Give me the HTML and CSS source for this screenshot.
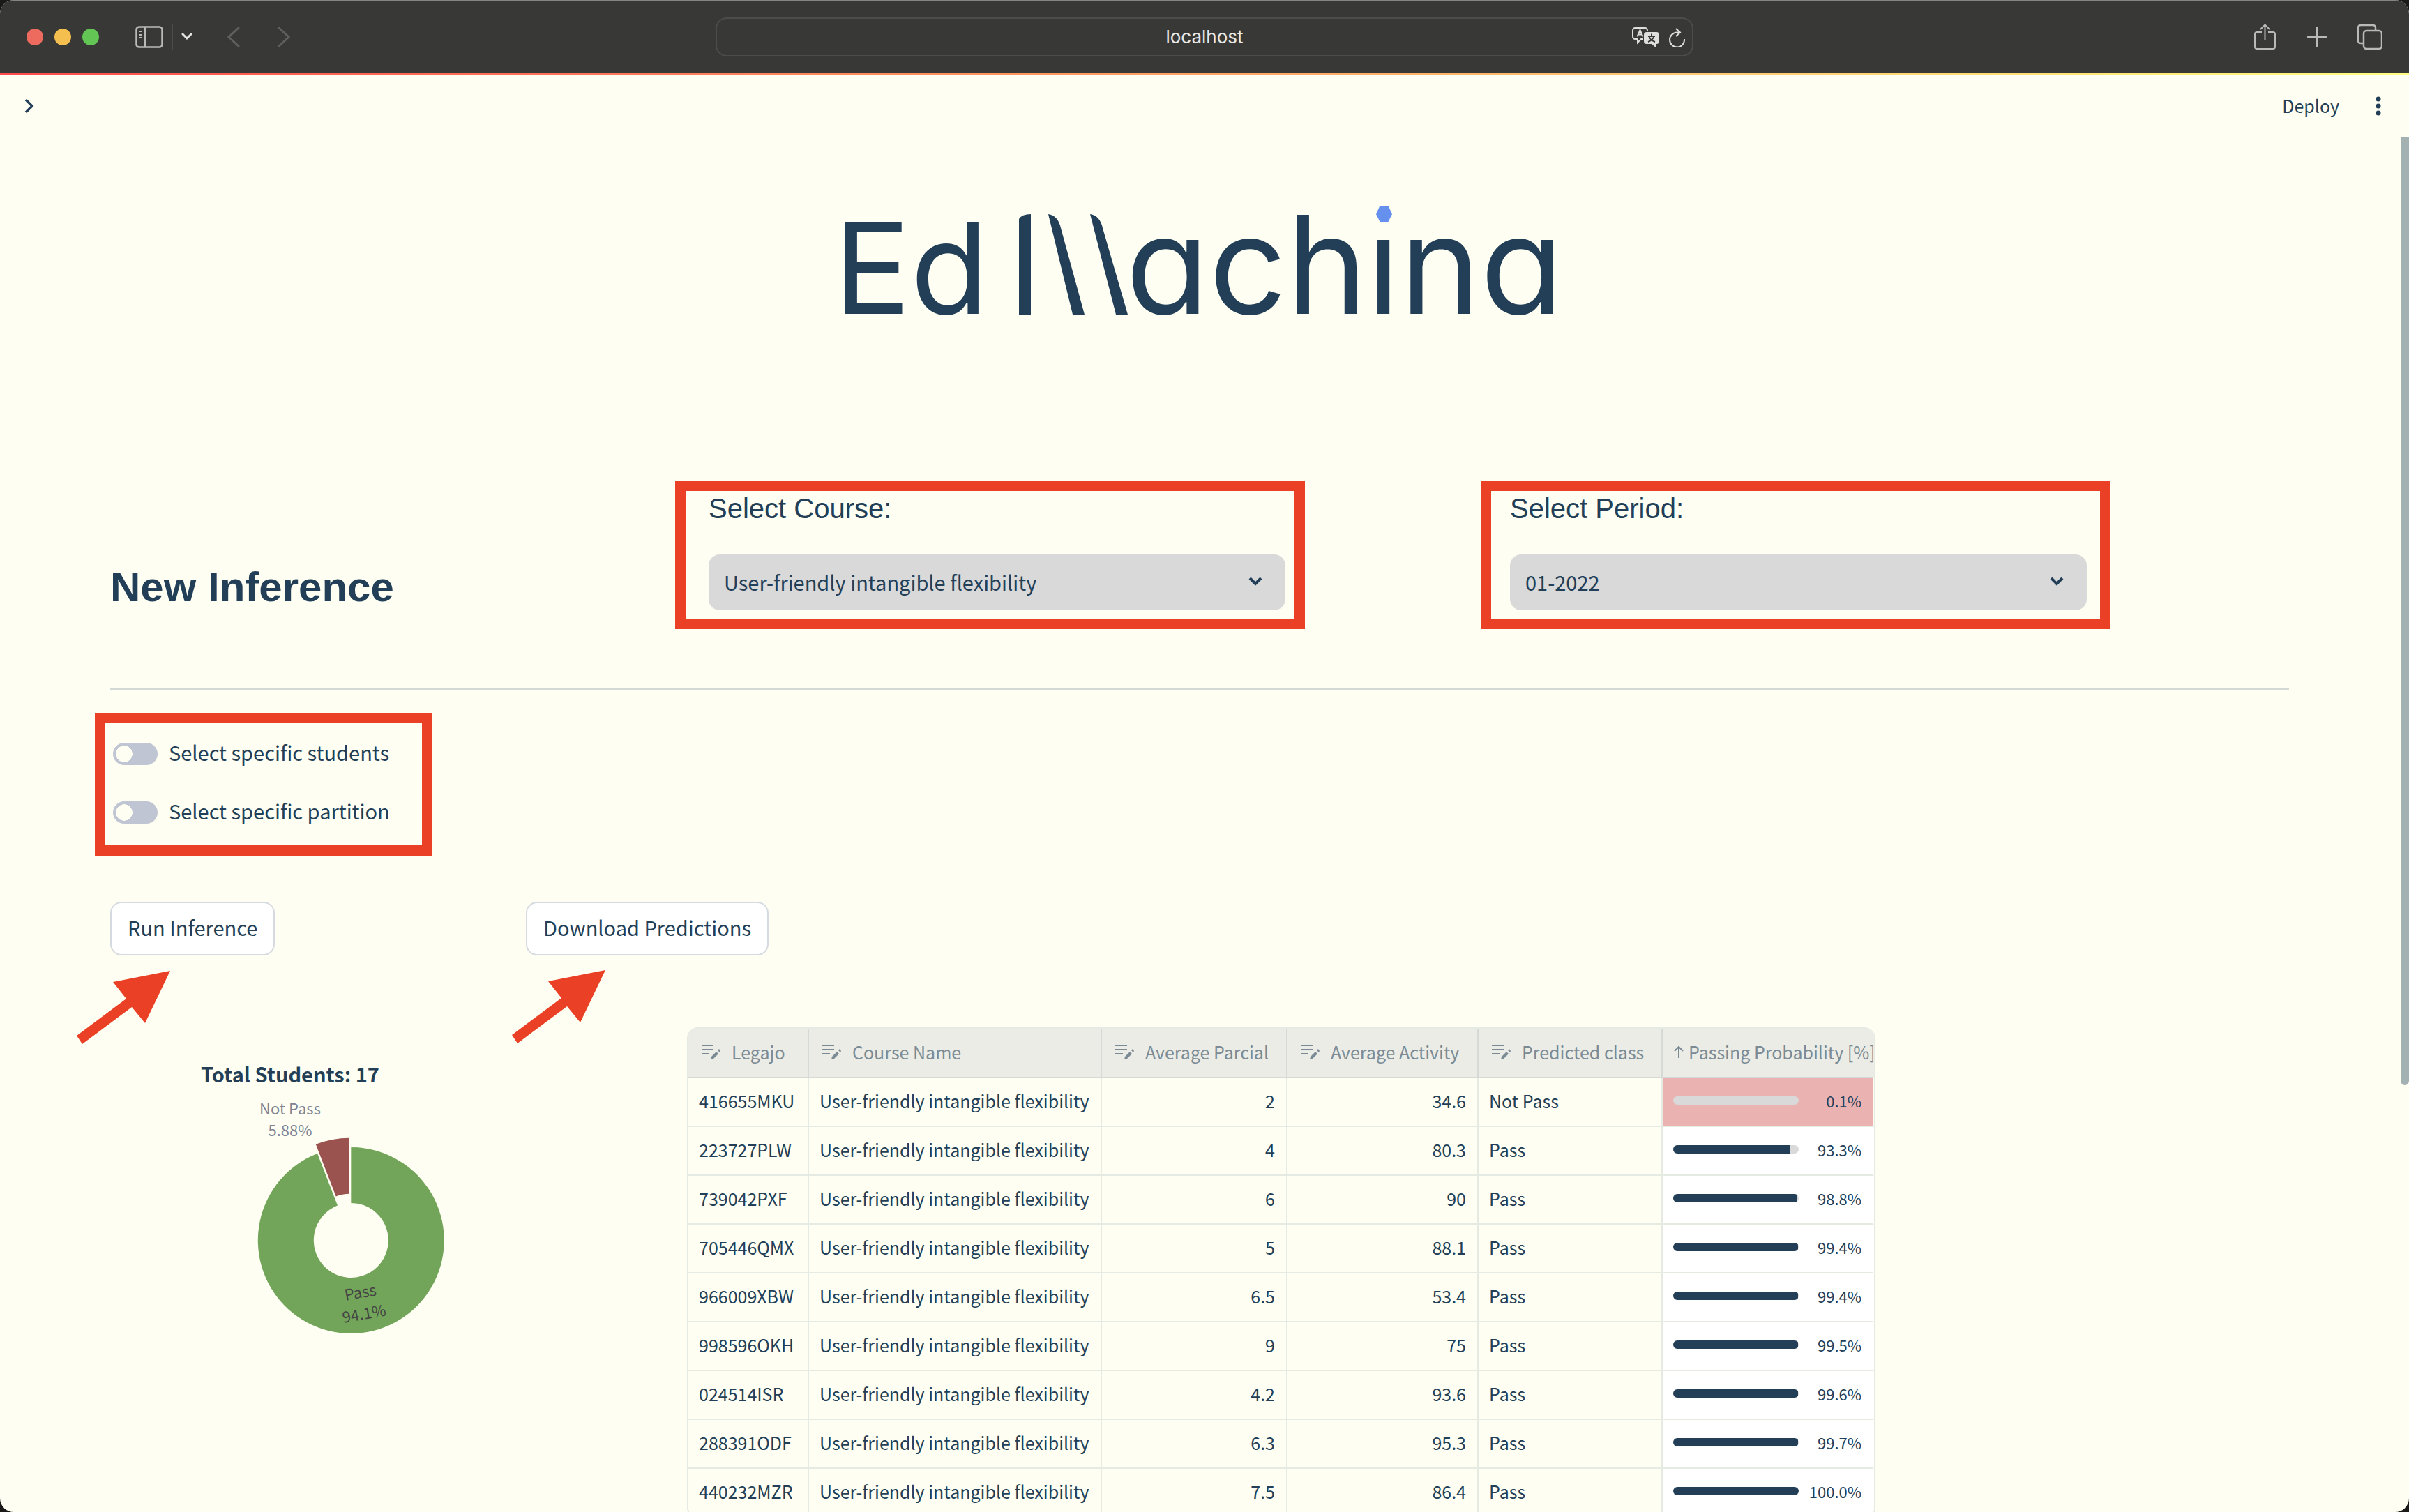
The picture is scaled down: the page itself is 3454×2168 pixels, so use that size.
FILE: index.html
```html
<!DOCTYPE html>
<html lang="en">
<head>
<meta charset="utf-8">
<title>Ed Machina</title>
<link rel="stylesheet" href="styles.css">
</head>
<body>
<svg class="defs" aria-hidden="true">
  <symbol id="edit" viewBox="0 0 28 24"><path d="M1 3h17M1 9h17M1 15h11" fill="none" stroke="currentColor" stroke-width="2"/><path d="M14 23l1-4 7-7 3 3-8 8zM24 10l2-2 2 3-1 2z" fill="currentColor"/></symbol>
  <symbol id="down" viewBox="0 0 20 14"><path d="M2 2l8 8 8-8" fill="none" stroke="currentColor" stroke-width="4"/></symbol>
  <symbol id="arrow" viewBox="0 0 136 108"><path d="M134 1L52 17 71 41 0 94 8 106 79 53 98 76z" fill="#ea4025"/></symbol>
</svg>
<div class="window">
  <div class="toolbar">
    <div class="tools">
      <div class="lights"><span class="light red"></span><span class="light yellow"></span><span class="light green"></span></div>
      <button class="tool sidebar" aria-label="Show sidebar"><svg width="40" height="32" viewBox="0 0 40 32"><rect x="1.500" y="1.500" width="37" height="29" rx="4" fill="none" stroke="#b9b9b7" stroke-width="2.500"/><path d="M14 2v28M5 8h5M5 13h5M5 17h5" stroke="#b9b9b7" stroke-width="2"/></svg></button>
      <span class="divider"></span>
      <button class="tool menu" aria-label="Tab groups"><svg width="16" height="12" viewBox="0 0 16 12"><path d="M2 2l6 6 6-6" fill="none" stroke="#e4e4e2" stroke-width="3" stroke-linecap="round"/></svg></button>
      <button class="tool back" aria-label="Back"><svg width="18" height="30" viewBox="0 0 18 30"><path d="M16 2L2 15l14 13" fill="none" stroke="#5f5f5d" stroke-width="3" stroke-linecap="round"/></svg></button>
      <button class="tool" aria-label="Forward"><svg width="18" height="30" viewBox="0 0 18 30"><path d="M2 2l14 13L2 28" fill="none" stroke="#5f5f5d" stroke-width="3" stroke-linecap="round"/></svg></button>
    </div>
    <div class="address">
      <span class="host">localhost</span>
      <div class="address-tools">
        <button class="tool" aria-label="Translate"><svg width="40" height="30" viewBox="0 0 40 30"><path d="M16 17h-3l-5 5v-5H5q-4 0-4-4V5q0-4 4-4h13q4 0 4 4v1" fill="none" stroke="#dededc" stroke-width="2"/><path d="M7.500 13.500l4-9.500 4 9.500M9 10.500h5" fill="none" stroke="#dededc" stroke-width="2"/><path d="M21 7h14q4 0 4 4v9q0 4-4 4h-1v5l-6-5h-7q-4 0-4-4v-9q0-4 4-4z" fill="#dededc"/><path d="M23 13h10M28 9.500v3M31.500 13q-2 6-8.500 8M24.500 13.500q2 5.500 8.500 7.500" fill="none" stroke="#383836" stroke-width="2"/></svg></button>
        <button class="tool" aria-label="Reload"><svg width="24" height="28" viewBox="0 0 24 28"><path d="M23 16A10.500 10.500 0 1 1 12.500 6.500h4M11 1l6 5.500-6 5.500" fill="none" stroke="#dededc" stroke-width="2"/></svg></button>
      </div>
    </div>
    <div class="tools end">
      <button class="tool" aria-label="Share"><svg width="32" height="38" viewBox="0 0 32 38"><path d="M11 12H4q-3 0-3 3v18q0 3 3 3h23q3 0 3-3V15q0-3-3-3h-7M15.500 24V2M9 8l6.500-6.500L22 8" fill="none" stroke="#b9b9b7" stroke-width="2"/></svg></button>
      <button class="tool" aria-label="New tab"><svg width="28" height="28" viewBox="0 0 28 28"><path d="M14 1v26M1 14h26" stroke="#b9b9b7" stroke-width="2.500" stroke-linecap="round"/></svg></button>
      <button class="tool" aria-label="Tab overview"><svg width="36" height="36" viewBox="0 0 36 36"><rect x="9" y="9" width="26" height="26" rx="4" fill="none" stroke="#b9b9b7" stroke-width="2.500"/><path d="M9 27H5q-4 0-4-4V5q0-4 4-4h17q4 0 4 4v4" fill="none" stroke="#b9b9b7" stroke-width="2.500"/></svg></button>
    </div>
  </div>
  <div class="decoration"></div>
  <div class="page">
    <header class="app-header">
      <button class="plain" aria-label="Open sidebar"><svg width="16" height="24" viewBox="0 0 16 24"><path d="M3 3l9 9-9 9" fill="none" stroke="#233f58" stroke-width="3.500"/></svg></button>
      <div class="app-actions">
        <button class="plain deploy">Deploy</button>
        <button class="plain" aria-label="More"><svg width="8" height="28" viewBox="0 0 8 28"><g fill="#233f58"><circle cx="4" cy="4" r="3.500"/><circle cx="4" cy="14" r="3.500"/><circle cx="4" cy="24" r="3.500"/></g></svg></button>
      </div>
    </header>
    <main>
      <svg class="logo" width="1020" height="160" viewBox="0 0 1020 160" role="img" aria-label="Ed Machina">
        <text class="wordmark wordmark-short" x="-14" y="158">Ed</text>
        <path d="M251 159V22q4-7 17-7v144zM293 15q14 2 18 20l34 124h-17zM353 15q14 2 18 20l36 124h-17z" fill="#233f58"/>
        <text class="wordmark" x="404" y="158">achına</text>
        <path d="M768 4h13l5 11-6 12h-11l-6-12z" fill="#6690ee"/>
      </svg>
      <section class="filters">
        <h1>New Inference</h1>
        <div class="field">
          <label for="course">Select Course:</label>
          <div class="select"><select id="course"><option>User-friendly intangible flexibility</option></select><svg class="caret" width="20" height="14"><use href="#down"/></svg></div>
          <div class="mark mark-course"></div>
        </div>
        <div class="field field-period">
          <label for="period">Select Period:</label>
          <div class="select"><select id="period"><option>01-2022</option></select><svg class="caret" width="20" height="14"><use href="#down"/></svg></div>
          <div class="mark mark-period"></div>
        </div>
      </section>
      <hr>
      <section class="toggles">
        <label class="toggle"><input type="checkbox" role="switch"><span>Select specific students</span></label>
        <label class="toggle"><input type="checkbox" role="switch"><span>Select specific partition</span></label>
        <div class="mark mark-toggles"></div>
      </section>
      <section class="actions">
        <div class="action"><button class="button">Run Inference</button><svg class="pointer pointer-run" width="136" height="108"><use href="#arrow"/></svg></div>
        <div class="action"><button class="button">Download Predictions</button><svg class="pointer pointer-download" width="136" height="108"><use href="#arrow"/></svg></div>
      </section>
      <section class="results">
        <svg class="chart" width="516" height="468" viewBox="0 0 516 468" role="img" aria-label="Share of students predicted to pass">
          <text class="chart-title" x="258" y="79" text-anchor="middle">Total Students: 17</text>
          <text class="chart-label" x="258" y="125" text-anchor="middle">Not Pass</text>
          <text class="chart-label" x="258" y="156" text-anchor="middle">5.88%</text>
          <path d="M345.300 172A133.500 133.500 0 1 1 297.100 181L326 255.600A53.500 53.500 0 1 0 345.300 252z" fill="#72a55a"/>
          <path d="M343 158.800A133.500 133.500 0 0 0 294.800 167.800L323.700 242.400A53.500 53.500 0 0 1 343 238.800z" fill="#9b5350"/>
          <g class="chart-inner" transform="translate(361 394) rotate(-10)"><text text-anchor="middle" y="-6">Pass</text><text text-anchor="middle" y="25">94.1%</text></g>
        </svg>
        <div class="grid">
          <table>
            <colgroup><col class="c1"><col class="c2"><col class="c3"><col class="c4"><col class="c5"><col class="c6"></colgroup>
            <thead><tr>
              <th><div class="head"><svg width="28" height="24"><use href="#edit"/></svg>Legajo</div></th>
              <th><div class="head"><svg width="28" height="24"><use href="#edit"/></svg>Course Name</div></th>
              <th><div class="head"><svg width="28" height="24"><use href="#edit"/></svg>Average Parcial</div></th>
              <th><div class="head"><svg width="28" height="24"><use href="#edit"/></svg>Average Activity</div></th>
              <th><div class="head"><svg width="28" height="24"><use href="#edit"/></svg>Predicted class</div></th>
              <th><div class="head sorted"><svg width="16" height="20" viewBox="0 0 16 20"><path d="M8 19V3M2 9l6-6 6 6" fill="none" stroke="currentColor" stroke-width="2"/></svg>Passing Probability [%]</div></th>
            </tr></thead>
            <tbody>
              <tr><td>416655MKU</td><td>User-friendly intangible flexibility</td><td class="num">2</td><td class="num">34.6</td><td>Not Pass</td><td class="prob low"><div class="meter"><span class="track"><span class="fill" style="width:0%"></span></span>0.1%</div></td></tr>
              <tr><td>223727PLW</td><td>User-friendly intangible flexibility</td><td class="num">4</td><td class="num">80.3</td><td>Pass</td><td class="prob"><div class="meter"><span class="track"><span class="fill" style="width:93.3%"></span></span>93.3%</div></td></tr>
              <tr><td>739042PXF</td><td>User-friendly intangible flexibility</td><td class="num">6</td><td class="num">90</td><td>Pass</td><td class="prob"><div class="meter"><span class="track"><span class="fill" style="width:98.8%"></span></span>98.8%</div></td></tr>
              <tr><td>705446QMX</td><td>User-friendly intangible flexibility</td><td class="num">5</td><td class="num">88.1</td><td>Pass</td><td class="prob"><div class="meter"><span class="track"><span class="fill" style="width:99.4%"></span></span>99.4%</div></td></tr>
              <tr><td>966009XBW</td><td>User-friendly intangible flexibility</td><td class="num">6.5</td><td class="num">53.4</td><td>Pass</td><td class="prob"><div class="meter"><span class="track"><span class="fill" style="width:99.4%"></span></span>99.4%</div></td></tr>
              <tr><td>998596OKH</td><td>User-friendly intangible flexibility</td><td class="num">9</td><td class="num">75</td><td>Pass</td><td class="prob"><div class="meter"><span class="track"><span class="fill" style="width:99.5%"></span></span>99.5%</div></td></tr>
              <tr><td>024514ISR</td><td>User-friendly intangible flexibility</td><td class="num">4.2</td><td class="num">93.6</td><td>Pass</td><td class="prob"><div class="meter"><span class="track"><span class="fill" style="width:99.6%"></span></span>99.6%</div></td></tr>
              <tr><td>288391ODF</td><td>User-friendly intangible flexibility</td><td class="num">6.3</td><td class="num">95.3</td><td>Pass</td><td class="prob"><div class="meter"><span class="track"><span class="fill" style="width:99.7%"></span></span>99.7%</div></td></tr>
              <tr><td>440232MZR</td><td>User-friendly intangible flexibility</td><td class="num">7.5</td><td class="num">86.4</td><td>Pass</td><td class="prob"><div class="meter"><span class="track"><span class="fill" style="width:100%"></span></span>100.0%</div></td></tr>
            </tbody>
          </table>
        </div>
      </section>
    </main>
    <div class="scroll-thumb"></div>
  </div>
</div>
</body>
</html>
```
FILE: styles.css
```css
* { box-sizing: border-box; }
body { margin: 0; background: #1a1a18; color: #233f58; font-family: "Noto Sans CJK SC", "Noto Sans", sans-serif; font-size: 29px; }
svg { display: block; flex: none; }
button, select, input { font: inherit; color: inherit; margin: 0; padding: 0; }
.defs { position: absolute; width: 0; height: 0; }

/* browser window */
.window { height: 100vh; display: flex; flex-direction: column; overflow: hidden; border-radius: 20px; background: #fefff2; }
.toolbar { height: 105px; flex: none; display: grid; grid-template-columns: 1fr 1402px 1fr; align-items: center; background: #383836; border-top: 2px solid #858583; border-bottom: 1px solid #000; }
.tools { display: flex; align-items: center; padding-left: 38px; }
.tools.end { justify-content: flex-end; gap: 44px; padding: 0 38px 0 0; }
.tool { display: block; border: 0; background: none; }
.lights { display: flex; gap: 16px; }
.light { width: 24px; height: 24px; border-radius: 50%; }
.red { background: #ed6a5e; }
.yellow { background: #f5bf4f; }
.green { background: #62c554; }
.sidebar { margin-left: 52px; }
.divider { width: 2px; height: 36px; margin: 0 12px; background: #4c4c4a; }
.back { margin: 0 54px 0 50px; }
.address { height: 56px; display: flex; align-items: center; justify-content: center; position: relative; border: 2px solid #4c4c4a; border-radius: 16px; }
.host { font-family: Inter, sans-serif; font-size: 26px; line-height: 32px; color: #e8e8e6; }
.address-tools { position: absolute; right: 10px; top: 12px; display: flex; align-items: center; gap: 12px; }
.decoration { height: 3px; flex: none; background: linear-gradient(90deg, #ff4b4b, #fffd80); }

/* app */
.page { flex: 1; min-height: 0; overflow: hidden; position: relative; }
.app-header { height: 88px; display: flex; justify-content: space-between; align-items: center; padding: 0 40px 0 34px; }
.app-actions { display: flex; align-items: center; gap: 52px; }
.plain { border: 0; background: none; }
.deploy { font-size: 25px; line-height: 32px; padding-bottom: 2px; }
.scroll-thumb { position: absolute; right: 0; top: 88px; width: 12px; height: 1360px; border-radius: 0 0 6px 6px; background: #a3b1b2; }
main { padding: 0 172px 0 158px; }
.logo { margin: 96px auto 253px; overflow: visible; }
.wordmark { font-family: Inter, sans-serif; font-size: 195px; font-feature-settings: "cv11"; fill: #233f58; }
.wordmark-short { font-size: 182px; }

.filters { display: grid; grid-template-columns: 858fr 827fr 322fr 827fr 290fr; align-items: end; }
h1 { margin: 0; font: bold 60px/66px "Liberation Sans", sans-serif; }
.field { position: relative; }
.field-period { grid-column: 4; }
.field label { display: block; margin-bottom: 42px; font: 40px/48px "Liberation Sans", sans-serif; }
.select { position: relative; }
select { display: block; width: 100%; height: 80px; padding: 0 80px 2px 22px; border: 0; border-radius: 16px; background: #d9d9d9; appearance: none; }
.caret { position: absolute; right: 33px; top: 32px; pointer-events: none; }
hr { height: 2px; margin: 112px 0 76px; border: 0; background: #d3dad6; }

.toggles { position: relative; width: max-content; display: grid; gap: 52px; padding-left: 4px; }
.toggle { display: flex; align-items: center; gap: 16px; height: 32px; line-height: 32px; }
.toggle span { padding-bottom: 6px; }
.toggle input { appearance: none; width: 64px; height: 32px; border-radius: 16px; background: radial-gradient(circle 12px at 16px 16px, #fefff2 96%, #bfc5d3); }

.actions { display: grid; grid-template-columns: 596fr 2528fr; margin: 112px 0 103px; }
.action { position: relative; }
.button { display: block; height: 77px; padding: 0 23px 6px; border: 2px solid #d5dae1; border-radius: 16px; background: #fff; }

/* annotations laid over the page */
.mark { position: absolute; border: 15px solid #ea4025; pointer-events: none; }
.mark-course { inset: -16px -28px -27px -48px; }
.mark-period { inset: -16px -34px -27px -42px; }
.mark-toggles { left: -22px; top: -43px; width: 484px; height: 205px; }
.pointer { position: absolute; }
.pointer-run { left: -48px; top: 98px; }
.pointer-download { left: -20px; top: 97px; }

.results { display: grid; grid-template-columns: 827fr 2297fr; align-items: start; }
.chart-title { font-size: 29px; font-weight: 700; fill: #233f58; }
.chart-label { font-size: 22px; fill: #808495; }
.chart-inner { font-size: 22px; fill: #444; }

.grid { width: max-content; overflow: hidden; border: 2px solid #e5eae3; border-radius: 16px; }
table { width: 1700px; table-layout: fixed; border-collapse: separate; border-spacing: 0; font-size: 25px; line-height: 36px; }
.c1 { width: 173px; }
.c2 { width: 420px; }
.c3 { width: 266px; }
.c4 { width: 274px; }
.c5 { width: 264px; }
.c6 { width: 303px; }
th, td { height: 70px; padding: 0 16px 4px 15px; border-right: 2px solid #e5eae3; border-bottom: 2px solid #e5eae3; text-align: left; font-weight: 400; white-space: nowrap; overflow: hidden; }
th { height: 71px; background: #ebece6; border-color: #d6dad7; color: #7b8b95; }
th:last-child, td:last-child { border-right-color: transparent; }
.head { display: flex; align-items: center; gap: 16px; padding-left: 3px; }
.sorted { gap: 6px; padding-left: 0; }
.num { text-align: right; }
.prob { background: #fff; }
.low { background: #ebb2b2; background-clip: padding-box; }
.meter { display: flex; align-items: center; justify-content: space-between; font-size: 22px; }
.track { width: 180px; height: 12px; overflow: hidden; border-radius: 6px; background: #d9d9d9; }
.fill { display: block; height: 12px; background: #233f58; }
```
